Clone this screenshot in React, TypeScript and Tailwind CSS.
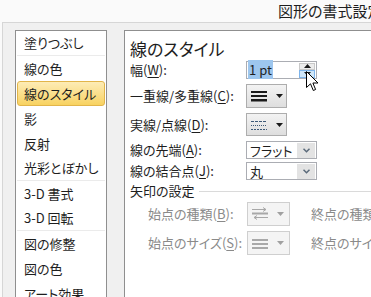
import type { ReactNode } from "react";

const items = [
  { label: "塗りつぶし", sep: true },
  { label: "線の色" },
  { label: "線のスタイル", active: true },
  { label: "影" },
  { label: "反射" },
  { label: "光彩とぼかし", sep: true },
  { label: "3-D 書式" },
  { label: "3-D 回転", sep: true },
  { label: "図の修整" },
  { label: "図の色" },
  { label: "アート効果" },
];

function Mn({ k }: { k: string }) {
  return <span className="underline underline-offset-[2px]">{k}</span>;
}

function Tri({ gray }: { gray?: boolean }) {
  return (
    <svg width="7" height="4" viewBox="0 0 7 4" className="block">
      <path d="M0 0h7L3.5 4z" fill={gray ? "#a0a0a0" : "#1a1a1a"} />
    </svg>
  );
}

function IconButton({ children, disabled }: { children: ReactNode; disabled?: boolean }) {
  return (
    <div
      className={
        disabled
          ? "flex h-full w-[43px] items-center gap-[9px] border border-[#cfcfcf] bg-[#f4f4f4] pl-[4px]"
          : "flex h-full w-[41px] items-center gap-[9px] border border-[#adadad] bg-gradient-to-b from-[#f3f3f3] to-[#dedede] pl-[4px]"
      }
    >
      {children}
      <Tri gray={disabled} />
    </div>
  );
}

function Select({ value }: { value: string }) {
  return (
    <div className="flex h-full w-[71px] items-center border border-[#abadb3] bg-white">
      <span className="flex-1 pl-[3px] text-[13px] leading-none">{value}</span>
      <div className="mr-px flex h-[15px] w-[18px] items-center justify-center bg-[#e3e3e3]">
        <svg width="7" height="5" viewBox="0 0 7 5">
          <path d="M0.5 0.8L3.5 3.8L6.5 0.8" fill="none" stroke="#5a6a7a" strokeWidth="1.5" />
        </svg>
      </div>
    </div>
  );
}

export default function App() {
  return (
    <div className="relative h-[297px] w-[371px] overflow-hidden bg-[#fafafa] font-['Noto_Sans_CJK_JP',sans-serif] text-[#1e1e1e] [font-feature-settings:'palt']">
      <div className="flex h-[22px] items-center whitespace-nowrap pl-[278px] text-[15px]">図形の書式設定</div>
      <div className="ml-[2px] flex h-[300px] border-l border-t border-[#d6d6d6] bg-[#f0f0f0] pl-[12px] pt-[7px]">
        <div className="w-[92px] shrink-0 border border-[#8f8f8f] bg-white">
          {items.map((it) => (
            <div
              key={it.label}
              className={
                it.active
                  ? "mx-px flex h-[25px] items-center rounded-[3px] border border-[#e2b54a] bg-gradient-to-b from-[#fdecb5] to-[#f8d25f] pl-[6px] text-[13px]"
                  : it.sep
                    ? "mx-px flex h-[25px] items-center border-b border-[#ebebeb] pl-[7px] text-[13px]"
                    : "mx-px flex h-[25px] items-center pl-[7px] text-[13px]"
              }
            >
              {it.label}
            </div>
          ))}
        </div>
        <div className="ml-[17px] w-[300px] shrink-0 border-l border-t border-[#8f8f8f] bg-white pl-[5px] text-[13px]">
          <div className="mt-[6px] flex h-[24px] items-center text-[17px]">線のスタイル</div>
          <div className="flex h-[18px] items-center">
            <div className="w-[116px]">
              幅(<Mn k="W" />):
            </div>
            <div className="flex h-full w-[71px] items-center border border-[#abadb3] bg-white">
              <span className="ml-[1px] flex-1">
                <span className="bg-[#9dc6ee] px-[1px] leading-none">1 pt</span>
              </span>
              <div className="mr-px flex h-[15px] w-[16px] flex-col">
                <div className="flex flex-1 items-center justify-center border border-[#c9c9c9] bg-[#ececec]">
                  <svg width="7" height="4" viewBox="0 0 7 4">
                    <path d="M0 4h7L3.5 0z" fill="#1a1a1a" />
                  </svg>
                </div>
                <div className="flex flex-1 items-center justify-center border border-[#7eb4ea] bg-[#cfe6f8]">
                  <Tri />
                </div>
              </div>
            </div>
          </div>
          <div className="mt-[5px] flex h-[24px] items-center">
            <div className="w-[116px]">
              一重線/多重線(<Mn k="C" />):
            </div>
            <IconButton>
              <svg width="16" height="12" viewBox="0 0 16 12" className="block">
                <rect x="0" y="1" width="16" height="2" fill="#1a1a1a" />
                <rect x="0" y="5" width="16" height="2" fill="#1a1a1a" />
                <rect x="0" y="9" width="16" height="2.5" fill="#1a1a1a" />
              </svg>
            </IconButton>
          </div>
          <div className="mt-[5px] flex h-[23px] items-center">
            <div className="w-[116px]">
              実線/点線(<Mn k="D" />):
            </div>
            <IconButton>
              <svg width="16" height="12" viewBox="0 0 16 12" className="block">
                <line x1="0" y1="2.5" x2="16" y2="2.5" stroke="#3d5a78" strokeDasharray="3 1" />
                <line x1="0" y1="6.5" x2="16" y2="6.5" stroke="#3d5a78" strokeDasharray="1 1" />
                <line x1="0" y1="10.5" x2="16" y2="10.5" stroke="#3d5a78" strokeDasharray="2 1" />
              </svg>
            </IconButton>
          </div>
          <div className="mt-[5px] flex h-[18px] items-center">
            <div className="w-[116px]">
              線の先端(<Mn k="A" />):
            </div>
            <Select value="フラット" />
          </div>
          <div className="mt-[3px] flex h-[18px] items-center">
            <div className="w-[116px]">
              線の結合点(<Mn k="J" />):
            </div>
            <Select value="丸" />
          </div>
          <div className="flex h-[22px] items-center gap-[4px]">
            <span>矢印の設定</span>
            <div className="h-px flex-1 bg-[#dadada]" />
          </div>
          <div className="flex h-[24px] items-center whitespace-nowrap text-[#8a8a8a]">
            <div className="w-[117px] pl-[18px]">
              始点の種類(<Mn k="B" />):
            </div>
            <IconButton disabled>
              <svg width="16" height="14" viewBox="0 0 16 14" className="block">
                <g stroke="#a8a8a8" fill="none" strokeWidth="1">
                  <path d="M0 2.5h14M11 0.5l3 2-3 2" />
                  <path d="M0 6.5h16" strokeWidth="2" />
                  <path d="M2 10.5h14M5 8.5l-3 2 3 2" />
                </g>
              </svg>
            </IconButton>
            <span className="ml-[21px]">
              終点の種類(<Mn k="E" />):
            </span>
          </div>
          <div className="mt-[5px] flex h-[24px] items-center whitespace-nowrap text-[#8a8a8a]">
            <div className="w-[117px] pl-[18px]">
              始点のサイズ(<Mn k="S" />):
            </div>
            <IconButton disabled>
              <svg width="16" height="12" viewBox="0 0 16 12" className="block">
                <rect x="0" y="2" width="16" height="2" fill="#a8a8a8" />
                <rect x="0" y="6" width="16" height="2" fill="#a8a8a8" />
                <rect x="0" y="10" width="16" height="2" fill="#a8a8a8" />
              </svg>
            </IconButton>
            <span className="ml-[21px]">
              終点のサイズ(<Mn k="Z" />):
            </span>
          </div>
        </div>
      </div>
      <svg className="absolute left-[306px] top-[71px]" width="13" height="21" viewBox="0 0 13 21">
        <path d="M0.5 0.5V16.5L4.5 12.8L7.3 19.5L9.6 18.5L6.9 12H12L0.5 0.5Z" fill="#ffffff" stroke="#000000" strokeWidth="1" strokeLinejoin="miter" />
      </svg>
    </div>
  );
}
